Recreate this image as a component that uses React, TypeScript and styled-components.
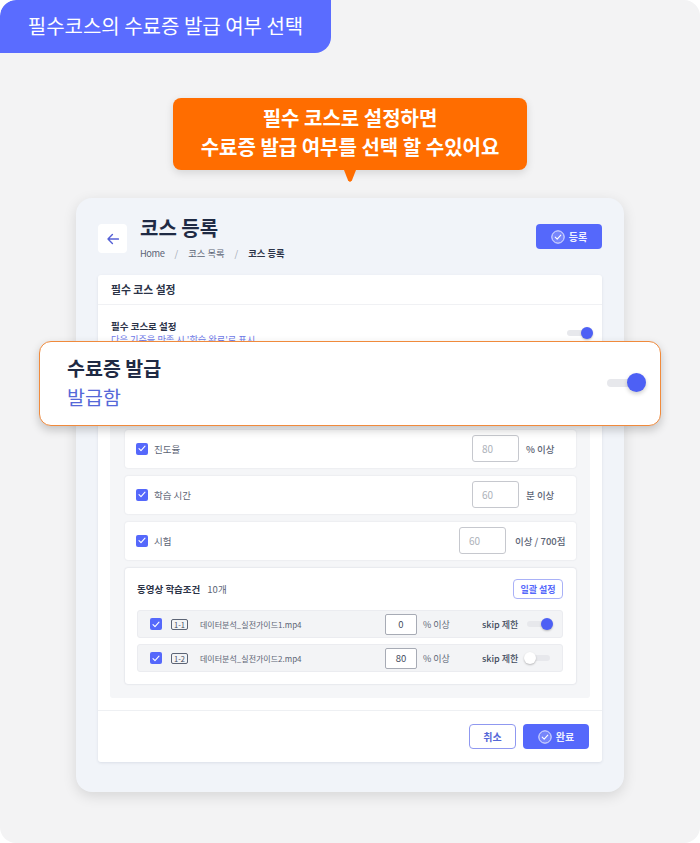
import styled, { createGlobalStyle } from 'styled-components';

const GlobalStyle = createGlobalStyle`
  html, body {
    margin: 0;
    padding: 0;
    background: #ffffff;
  }
  * {
    box-sizing: border-box;
  }
`;

const criteria = [
  { label: '진도율', value: '80', unit: '% 이상', wide: false },
  { label: '학습 시간', value: '60', unit: '분 이상', wide: false },
  { label: '시험', value: '60', unit: '이상 / 700점', wide: true },
];

const videos = [
  { code: '1-1', name: '데이터분석_실전가이드1.mp4', value: '0', skip: true },
  { code: '1-2', name: '데이터분석_실전가이드2.mp4', value: '80', skip: false },
];

function CheckCircle() {
  return (
    <svg width="14" height="14" viewBox="0 0 14 14" fill="none">
      <circle cx="7" cy="7" r="6.2" fill="rgba(255,255,255,0.2)" stroke="#e6e9ff" strokeWidth="1" />
      <path d="M4.2 7.2l2 2 3.6-4" stroke="#ffffff" strokeWidth="1.1" strokeLinecap="round" strokeLinejoin="round" />
    </svg>
  );
}

function Tick() {
  return (
    <svg width="8" height="7" viewBox="0 0 8 7" fill="none">
      <path d="M1 3.6l2 2L7 1.2" stroke="#ffffff" strokeWidth="1.1" strokeLinecap="round" strokeLinejoin="round" />
    </svg>
  );
}

export default function App() {
  return (
    <Page>
      <GlobalStyle />
      <TitleTag>필수코스의 수료증 발급 여부 선택</TitleTag>
      <Tooltip>
        필수 코스로 설정하면
        <br />
        수료증 발급 여부를 선택 할 수있어요
      </Tooltip>
      <Card>
        <Header>
          <BackButton>
            <svg width="12" height="12" viewBox="0 0 12 12" fill="none">
              <path d="M11.4 6H1M5.4 1.6L1 6l4.4 4.4" stroke="#5560d6" strokeWidth="1.4" strokeLinecap="round" strokeLinejoin="round" />
            </svg>
          </BackButton>
          <HeaderText>
            <PageTitle>코스 등록</PageTitle>
            <Breadcrumb>
              <HomeCrumb>Home</HomeCrumb>
              <Slash>/</Slash>
              <span>코스 목록</span>
              <Slash>/</Slash>
              <strong>코스 등록</strong>
            </Breadcrumb>
          </HeaderText>
          <PrimaryButton>
            <CheckCircle />
            등록
          </PrimaryButton>
        </Header>

        <Panel>
          <PanelHead>필수 코스 설정</PanelHead>
          <RequiredRow>
            <div>
              <RowLabel>필수 코스로 설정</RowLabel>
              <RowHint>다음 기준을 만족 시 '학습 완료'로 표시</RowHint>
            </div>
            <Toggle $on />
          </RequiredRow>

          <Criteria>
            {criteria.map((c) => (
              <CriteriaCard key={c.label}>
                <Checkbox><Tick /></Checkbox>
                <CriteriaLabel>{c.label}</CriteriaLabel>
                <ValueBox>{c.value}</ValueBox>
                <Unit $wide={c.wide}>{c.unit}</Unit>
              </CriteriaCard>
            ))}
            <VideoCard>
              <VideoHead>
                <VideoTitle>동영상 학습조건</VideoTitle>
                <VideoCount>10개</VideoCount>
                <BulkButton>일괄 설정</BulkButton>
              </VideoHead>
              <VideoList>
                {videos.map((v) => (
                  <VideoRow key={v.code}>
                    <Checkbox><Tick /></Checkbox>
                    <CodeBadge>{v.code}</CodeBadge>
                    <FileName>{v.name}</FileName>
                    <PercentBox>{v.value}</PercentBox>
                    <PercentUnit>% 이상</PercentUnit>
                    <SkipLabel>skip 제한</SkipLabel>
                    <Toggle $on={v.skip} />
                  </VideoRow>
                ))}
              </VideoList>
            </VideoCard>
          </Criteria>

          <Footer>
            <CancelButton>취소</CancelButton>
            <PrimaryButton>
              <CheckCircle />
              완료
            </PrimaryButton>
          </Footer>
        </Panel>
      </Card>

      <Highlight>
        <div>
          <HighlightTitle>수료증 발급</HighlightTitle>
          <HighlightValue>발급함</HighlightValue>
        </div>
        <BigToggle />
      </Highlight>
    </Page>
  );
}

const Page = styled.div`
  position: relative;
  width: 700px;
  height: 843px;
  overflow: hidden;
  background: #f3f3f4;
  border-radius: 16px;
  font-family: 'Noto Sans CJK KR', 'Noto Sans', sans-serif;
  color: #1f2a44;
  padding-top: 98px;
`;

const TitleTag = styled.div`
  position: absolute;
  top: 0;
  left: 0;
  width: 331px;
  height: 53px;
  display: flex;
  align-items: center;
  justify-content: center;
  padding-bottom: 2px;
  background: #5a6cff;
  border-radius: 16px 0 16px 0;
  color: #ffffff;
  font-size: 20px;
  font-weight: 400;
  white-space: nowrap;
`;

const Tooltip = styled.div`
  position: relative;
  width: 354px;
  height: 72px;
  margin: 0 0 28px 173px;
  padding-top: 5px;
  background: #ff6d00;
  border-radius: 8px;
  box-shadow: 0 3px 8px rgba(0, 0, 0, 0.12);
  color: #ffffff;
  font-size: 20px;
  font-weight: 700;
  line-height: 29px;
  text-align: center;
  white-space: nowrap;

  &::after {
    content: '';
    position: absolute;
    left: 171px;
    top: 72px;
    width: 12px;
    height: 12px;
    background: #ff6d00;
    clip-path: polygon(0 0, 100% 0, 66% 88%, 50% 100%, 34% 88%);
  }
`;

const Card = styled.div`
  width: 548px;
  height: 594px;
  margin-left: 76px;
  padding: 26px 22px 0;
  background: #f1f4f9;
  border-radius: 16px;
  box-shadow: 0 4px 14px rgba(0, 0, 0, 0.12);
`;

const Header = styled.div`
  display: flex;
  align-items: flex-start;
  height: 51px;
`;

const BackButton = styled.div`
  width: 29px;
  height: 29px;
  display: flex;
  align-items: center;
  justify-content: center;
  background: #ffffff;
  border-radius: 4px;
`;

const HeaderText = styled.div`
  flex: 1;
  margin-left: 13px;
  margin-top: -11px;
`;

const PageTitle = styled.div`
  font-size: 20px;
  font-weight: 700;
  line-height: 30px;
  color: #1f2a44;
`;

const Breadcrumb = styled.div`
  display: flex;
  align-items: center;
  margin-top: 3px;
  font-size: 9.3px;
  line-height: 14px;
  color: #5c6475;

  strong {
    font-weight: 700;
    color: #2b3347;
  }
`;

const HomeCrumb = styled.span`
  letter-spacing: -0.4px;
`;

const Slash = styled.span`
  margin: 0 10px;
  color: #a4aab6;
`;

const PrimaryButton = styled.div`
  width: 66px;
  height: 25px;
  display: flex;
  align-items: center;
  justify-content: center;
  gap: 4px;
  background: #5568fb;
  border-radius: 4px;
  color: #f0f2ff;
  font-size: 10px;
  font-weight: 700;
`;

const Panel = styled.div`
  height: 487px;
  background: #ffffff;
  border-radius: 3px;
  box-shadow: 0 1px 3px rgba(30, 40, 80, 0.1);
`;

const PanelHead = styled.div`
  height: 30px;
  padding: 0 13px 2px;
  display: flex;
  align-items: center;
  border-bottom: 1px solid #f0f1f4;
  font-size: 10.8px;
  font-weight: 700;
  color: #2b3347;
`;

const RequiredRow = styled.div`
  height: 96px;
  padding: 14px 9px 0 13px;
  display: flex;
  align-items: flex-start;
  justify-content: space-between;

  > div:last-child {
    margin-top: 11px;
  }
`;

const RowLabel = styled.div`
  font-size: 9.5px;
  font-weight: 700;
  line-height: 14px;
  color: #2b3347;
`;

const RowHint = styled.div`
  font-size: 9.2px;
  line-height: 13px;
  color: #6d78e8;
`;

const Toggle = styled.div<{ $on?: boolean }>`
  position: relative;
  width: 23px;
  height: 6px;
  margin: 0 3px 0 0;
  flex-shrink: 0;
  background: #e7e8ec;
  border-radius: 3px;

  &::after {
    content: '';
    position: absolute;
    top: -3px;
    left: ${({ $on }) => ($on ? '14px' : '-3px')};
    width: 12px;
    height: 12px;
    border-radius: 50%;
    background: ${({ $on }) => ($on ? '#4d60f5' : '#ffffff')};
    box-shadow: 0 1px 2px rgba(0, 0, 0, 0.25);
  }
`;

const Criteria = styled.div`
  height: 297px;
  margin: 0 12px;
  padding: 29px 14px 0 15px;
  display: flex;
  flex-direction: column;
  gap: 8.5px;
  background: #f5f6f8;
  border-radius: 3px;
`;

const CriteriaCard = styled.div`
  height: 37.5px;
  padding: 0 6px 0 11px;
  display: flex;
  align-items: center;
  flex-shrink: 0;
  background: #ffffff;
  border-radius: 3px;
  box-shadow: 0 0 2px rgba(30, 40, 80, 0.12);
`;

const Checkbox = styled.div`
  width: 12px;
  height: 12px;
  display: flex;
  align-items: center;
  justify-content: center;
  flex-shrink: 0;
  background: #5568fb;
  border-radius: 2px;
`;

const CriteriaLabel = styled.div`
  flex: 1;
  margin-left: 6px;
  font-size: 9.5px;
  color: #5c6475;
`;

const ValueBox = styled.div`
  width: 47px;
  height: 27px;
  padding-left: 9px;
  display: flex;
  align-items: center;
  border: 1px solid #c6c8ce;
  border-radius: 3px;
  font-size: 10px;
  color: #aeb2ba;
`;

const Unit = styled.div<{ $wide: boolean }>`
  width: ${({ $wide }) => ($wide ? '55px' : '44px')};
  margin-left: ${({ $wide }) => ($wide ? '9px' : '7px')};
  font-size: 9.5px;
  font-weight: 500;
  color: #5c6475;
  white-space: nowrap;
`;

const VideoCard = styled.div`
  height: 116px;
  padding: 11px 13px 0 12px;
  flex-shrink: 0;
  background: #ffffff;
  border-radius: 3px;
  box-shadow: 0 0 2px rgba(30, 40, 80, 0.2);
`;

const VideoHead = styled.div`
  height: 20px;
  display: flex;
  align-items: center;
`;

const VideoTitle = styled.div`
  font-size: 9.5px;
  font-weight: 700;
  color: #2b3347;
`;

const VideoCount = styled.div`
  flex: 1;
  margin-left: 7px;
  font-size: 9.5px;
  color: #5c6475;
`;

const BulkButton = styled.div`
  width: 50px;
  height: 20px;
  display: flex;
  align-items: center;
  justify-content: center;
  border: 1px solid #a9b1f7;
  border-radius: 4px;
  font-size: 9px;
  font-weight: 700;
  color: #5568fb;
`;

const VideoList = styled.div`
  display: flex;
  flex-direction: column;
  gap: 6px;
  margin-top: 11px;
`;

const VideoRow = styled.div`
  height: 28px;
  padding: 0 9px 0 12px;
  display: flex;
  align-items: center;
  background: #f3f4f6;
  border: 1px solid #ebecf0;
  border-radius: 3px;
`;

const CodeBadge = styled.div`
  width: 17px;
  height: 11px;
  margin-left: 9px;
  display: flex;
  align-items: center;
  justify-content: center;
  border: 1px solid #5c6475;
  border-radius: 2px;
  font-size: 7.5px;
  color: #444c5e;
`;

const FileName = styled.div`
  flex: 1;
  margin-left: 12px;
  font-size: 8px;
  color: #5c6475;
`;

const PercentBox = styled.div`
  width: 32px;
  height: 21px;
  display: flex;
  align-items: center;
  justify-content: center;
  background: #ffffff;
  border: 1px solid #a7abb5;
  border-radius: 2px;
  font-size: 9.5px;
  color: #444c5e;
`;

const PercentUnit = styled.div`
  width: 59px;
  margin-left: 6px;
  font-size: 9px;
  color: #5c6475;
`;

const SkipLabel = styled.div`
  width: 36px;
  margin-right: 9px;
  font-size: 9px;
  font-weight: 500;
  color: #444c5e;
  white-space: nowrap;
`;

const Footer = styled.div`
  height: 52px;
  margin-top: 12px;
  padding: 13px 13px 0;
  display: flex;
  justify-content: flex-end;
  gap: 7px;
  border-top: 1px solid #eef0f3;
`;

const CancelButton = styled.div`
  width: 47px;
  height: 25px;
  display: flex;
  align-items: center;
  justify-content: center;
  background: #ffffff;
  border: 1px solid #8f98f0;
  border-radius: 4px;
  font-size: 10px;
  font-weight: 700;
  color: #5568d8;
`;

const Highlight = styled.div`
  position: absolute;
  left: 39px;
  top: 341px;
  width: 622px;
  height: 85px;
  padding: 0 14px 2px 27px;
  display: flex;
  align-items: center;
  justify-content: space-between;
  background: #ffffff;
  border: 1.5px solid #f08a3c;
  border-radius: 12px;
  box-shadow: 0 4px 10px rgba(0, 0, 0, 0.2);
`;

const HighlightTitle = styled.div`
  font-size: 19.5px;
  font-weight: 700;
  line-height: 28px;
  color: #1f2a44;
`;

const HighlightValue = styled.div`
  font-size: 19.5px;
  line-height: 30px;
  color: #5568d8;
`;

const BigToggle = styled.div`
  position: relative;
  width: 39px;
  height: 8px;
  background: #e7e8ec;
  border-radius: 4px;

  &::after {
    content: '';
    position: absolute;
    top: -5.5px;
    left: 20px;
    width: 19px;
    height: 19px;
    border-radius: 50%;
    background: #4d60f5;
    box-shadow: 0 2px 4px rgba(0, 0, 0, 0.2);
  }
`;
